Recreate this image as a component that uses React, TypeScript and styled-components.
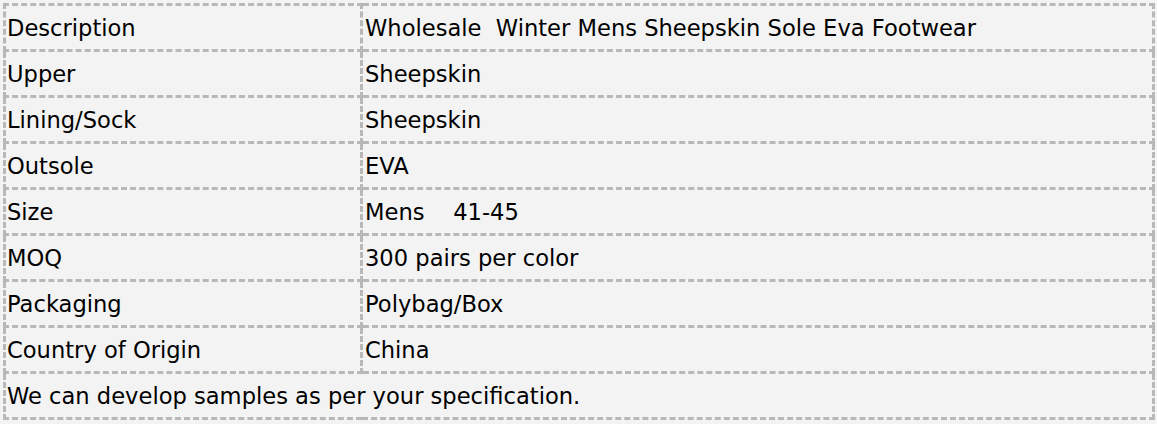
import React from 'react'
import styled, {createGlobalStyle} from 'styled-components'

const GlobalStyle = createGlobalStyle`
  html, body {
    margin: 0;
    padding: 0;
    background: #f3f3f3;
  }
  body {
    padding: 3px 2px 0 3px;
  }
`

const rows: [string, string][] = [
    ['Description', 'Wholesale  Winter Mens Sheepskin Sole Eva Footwear'],
    ['Upper', 'Sheepskin'],
    ['Lining/Sock', 'Sheepskin'],
    ['Outsole', 'EVA'],
    ['Size', 'Mens    41-45'],
    ['MOQ', '300 pairs per color'],
    ['Packaging', 'Polybag/Box'],
    ['Country of Origin', 'China'],
]

const App = () => {
    return (
        <>
            <GlobalStyle/>
            <SpecTable>
                <colgroup>
                    <col style={{width: 357}}/>
                    <col/>
                </colgroup>
                <tbody>
                {rows.map(([label, value]) => (
                    <Row key={label}>
                        <Cell>{label}</Cell>
                        <Cell value>{value}</Cell>
                    </Row>
                ))}
                <Row>
                    <Cell colSpan={2}>We can develop samples as per your specification.</Cell>
                </Row>
                </tbody>
            </SpecTable>
        </>
    )
}

export default App

const SpecTable = styled.table`
  width: 1152px;
  border-collapse: collapse;
  table-layout: fixed;
  background: #f3f3f3;
  border: 3px dashed #b8b8b8;
  font-family: "Comic Sans MS", "DejaVu Sans", sans-serif;
  font-size: 22.6px;
  color: #000;
`

const Row = styled.tr`
  height: 46px;
`

const Cell = styled.td<{ value?: boolean }>`
  border: 3px dashed #b8b8b8;
  padding: 0 0 0 ${props => props.value ? '2px' : '1px'};
  white-space: pre;
  vertical-align: middle;
`
